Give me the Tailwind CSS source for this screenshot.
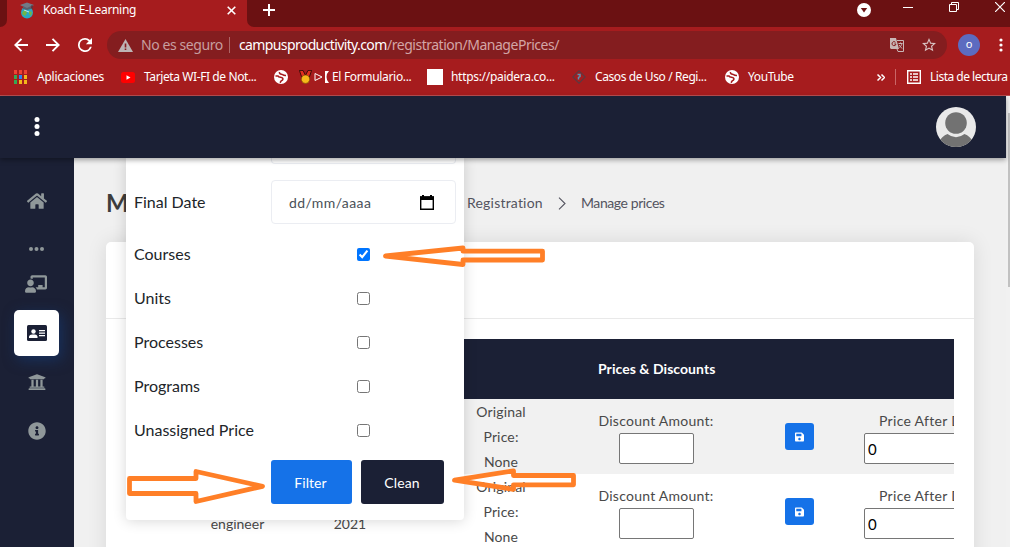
<!DOCTYPE html>
<html lang="es">
<head>
<meta charset="utf-8">
<title>Koach E-Learning</title>
<script src="https://cdn.jsdelivr.net/npm/@tailwindcss/browser@4"></script>
</head>
<body class="w-[1010px] h-[547px] overflow-hidden relative flex flex-col bg-[#f0f0f0] font-['Lato',sans-serif]">

<!-- Browser chrome -->
<div class="h-[96px] shrink-0 bg-[#a61c1e] border-b border-[#bb4e50] text-white font-['Noto_Sans',sans-serif] text-[12px] flex flex-col whitespace-nowrap">
  <div class="h-[27px] flex bg-[#a61c1e]">
    <div class="w-[7px] bg-[#6b1112] rounded-br-[7px]"></div>
    <div class="w-[240px] h-[20px] flex items-center pl-[13px]">
      <svg class="w-[14px] h-[17px]" viewBox="0 0 14 17"><circle cx="7" cy="10.5" r="6" fill="#28a9c4"/><path d="M3 9l3-1 1 3-2 3-3-2zM9 9l3 1-1 4-2-2z" fill="#6fb54b"/><path d="M4 8l5 2" stroke="#bde5ed"/><path d="M0 3l7-2.5L14 3 7 6.500z" fill="#727a87"/><path d="M3 4v3l4 1 4-1V4L7 6z" fill="#59606e"/><path d="M12 3v4" stroke="#39414d"/></svg>
      <span class="ml-[9px] w-[184px] tracking-[-0.33px]">Koach E-Learning</span>
      <svg class="w-[9px] h-[9px]" viewBox="0 0 9 9"><path d="M.7.7l7.600 7.600M8.300.7L.7 8.300" stroke="#fff" stroke-width="1.600"/></svg>
    </div>
    <div class="flex-1 h-[27px] bg-[#6b1112] rounded-bl-[7px] flex items-start">
      <svg class="ml-[16px] mt-[4px] w-[12px] h-[12px]" viewBox="0 0 12 12"><path d="M6 0v12M0 6h12" stroke="#fff" stroke-width="2"/></svg>
      <svg class="ml-[582px] mt-[3px] w-[14px] h-[14px]" viewBox="0 0 14 14"><circle cx="7" cy="7" r="7" fill="#fff"/><path d="M3.800 5h6.400L7 9.500z" fill="#6b1112"/></svg>
      <svg class="ml-[32px] mt-[7px] w-[10px] h-[1px]" viewBox="0 0 10 1"><path d="M0 0h10v1H0z" fill="#fff"/></svg>
      <svg class="ml-[36px] mt-[2px] w-[10px] h-[10px]" viewBox="0 0 10 10"><path d="M.5 2.500h7v7h-7zM2.500 2.500v-2h7v7h-2" fill="none" stroke="#fff"/></svg>
      <svg class="ml-[36px] mt-[2px] w-[10px] h-[10px]" viewBox="0 0 10 10"><path d="M0 0l10 10M10 0L0 10" stroke="#fff" stroke-width="1.200"/></svg>
    </div>
  </div>

  <div class="h-[36px] shrink-0 flex items-center text-[14px]">
    <svg class="ml-[14px] w-[14px] h-[14px]" viewBox="0 0 14 14"><path d="M14 7H1.500M7.500.8L1.300 7l6.200 6.200" fill="none" stroke="#fff" stroke-width="1.900"/></svg>
    <svg class="ml-[18px] w-[14px] h-[14px]" viewBox="0 0 14 14"><path d="M0 7h12.500M6.500.8L12.700 7l-6.200 6.200" fill="none" stroke="#fff" stroke-width="1.900"/></svg>
    <svg class="ml-[18px] w-[14px] h-[14px]" viewBox="4 4 16 16"><path d="M17.650 6.350A7.960 7.960 0 0 0 12 4a8 8 0 1 0 7.730 10h-2.080A6 6 0 1 1 12 6c1.660 0 3.140.69 4.220 1.780L13 11h7V4l-2.350 2.350z" fill="#fff"/></svg>
    <div class="ml-[15px] w-[840px] shrink-0 h-[28px] rounded-full bg-[#841d1f] flex items-center">
      <svg class="ml-[11px] w-[15px] h-[13px] shrink-0" viewBox="0 0 15 13"><path d="M7.500 0L15 13H0z" fill="#bdb4b4"/><path d="M6.700 4.500h1.600v4H6.700zM6.700 9.500h1.600v1.600H6.700z" fill="#841d1f"/></svg>
      <span class="ml-[8px] w-[88px] shrink-0 text-[#c79fa0] tracking-[-0.42px] pb-[2px]">No es seguro</span>
      <span class="w-px h-[16px] bg-[#ad6667] shrink-0"></span>
      <span class="ml-[9px] w-[148px] shrink-0 tracking-[-0.62px] pb-[2px]">campusproductivity.com</span>
      <span class="w-[503px] shrink-0 text-[#d3a5a6] tracking-[-0.48px] pb-[2px]">/registration/ManagePrices/</span>
      <svg class="w-[14px] h-[14px] shrink-0" viewBox="0 0 14 14"><path d="M0 0h6l3 11H1L0 10z" fill="#c9b6b6"/><path d="M7 2.500h6.500v11H8L7 11" fill="none" stroke="#c9b6b6"/><path d="M5.500 4.300A2 2 0 1 0 6 6H4.300" fill="none" stroke="#841d1f"/><path d="M8.500 5.500h4M10.500 4.500v1M12 5.500c-.5 2-1.500 3-2.500 4M9 7l3 3.500" fill="none" stroke="#c9b6b6"/></svg>
      <svg class="ml-[18px] w-[14px] h-[14px] shrink-0" viewBox="2 2 20 20"><path d="M22 9.240l-7.190-.62L12 2 9.190 8.630 2 9.240l5.460 4.730L5.820 21 12 17.270 18.180 21l-1.630-7.030L22 9.240zM12 15.400l-3.760 2.270 1-4.280-3.320-2.880 4.380-.38L12 6.100l1.710 4.040 4.380.38-3.320 2.880 1 4.280L12 15.400z" fill="#d9c4c4"/></svg>
    </div>
    <div class="ml-[11px] w-[22px] h-[22px] shrink-0 rounded-full bg-[#5c6bc0] text-[11px] flex items-center justify-center pb-px">o</div>
    <svg class="ml-[19px] w-[4px] h-[14px] shrink-0" viewBox="0 0 4 14"><g fill="#fff"><circle cx="2" cy="2" r="1.600"/><circle cx="2" cy="7" r="1.600"/><circle cx="2" cy="12" r="1.600"/></g></svg>
  </div>

  <div class="h-[28px] flex items-center pl-[14px]">
    <div class="w-[107px] shrink-0 flex items-center">
      <svg class="w-[13px] h-[14px]" viewBox="0 0 13 14"><path d="M0 0h3v4H0zM5 0h3v4H5zM10 0h3v4h-3z" fill="#ee4234"/><path d="M0 5h3v4H0z" fill="#37a852"/><path d="M5 5h3v4H5z" fill="#2c84f4"/><path d="M10 5h3v4h-3zM5 10h3v4H5zM10 10h3v4h-3z" fill="#f4b71b"/><path d="M0 10h3v4H0z" fill="#37a852"/></svg>
      <span class="ml-[10px] tracking-[-0.22px]">Aplicaciones</span>
    </div>
    <div class="w-[153px] shrink-0 flex items-center">
      <svg class="w-[14px] h-[11px]" viewBox="0 0 14 11"><rect width="14" height="11" rx="2.500" fill="#f00"/><path d="M5.500 3.200v4.600l4-2.300z" fill="#fff"/></svg>
      <span class="ml-[9px] tracking-[-0.4px]">Tarjeta WI-FI de Not...</span>
    </div>
    <div class="w-[153px] shrink-0 flex items-center">
      <svg class="w-[14px] h-[14px]" viewBox="0 0 14 14"><circle cx="7" cy="7" r="7" fill="#fff"/><path d="M1.500 6h2.500c.8 1.800 3.500.8 4.500 2s0 2-1 2.700-1 1.500-1.500 2M5.500 2c-.3 1.800.7 2 2 2.200s1.200 1.500 4.500 1.300" fill="none" stroke="#a61c1e" stroke-width="1.600"/></svg>
      <svg class="ml-[11px] w-[13px] h-[14px]" viewBox="0 0 13 14"><path d="M.4.4H4l2.500 5L9 .4h3.600L10 8H3z" fill="#e0301e" stroke="#1d0b05" stroke-width=".8"/><circle cx="6.500" cy="9.200" r="4.200" fill="#f6b91a" stroke="#7a4a05" stroke-width=".7"/></svg>
      <span class="ml-[2px] w-[18px] flex items-center"><svg class="w-[9px] h-[10px]" viewBox="0 0 9 10"><path d="M1 1.500v7L8 5z" fill="none" stroke="#fff"/></svg><svg class="ml-[2px] w-[4px] h-[12px]" viewBox="0 0 4 12"><path d="M0 0h4Q1.500 2.500 1.500 6T4 12H0z" fill="#fff"/></svg></span>
      <span class="tracking-[-0.33px]">El Formulario...</span>
    </div>
    <div class="w-[145px] shrink-0 flex items-center">
      <span class="w-[16px] h-[16px] bg-white"></span>
      <span class="ml-[8px] tracking-[-0.3px]">https://paidera.co...</span>
    </div>
    <div class="w-[153px] shrink-0 flex items-center">
      <svg class="w-[14px] h-[14px]" viewBox="0 0 14 14"><path d="M7 .8L13.200 7 7 13.200.8 7z" fill="none" stroke="#5d3840" stroke-width="1.200"/><path d="M5.500 4.500h2.500v2L6.500 7.500v2" fill="none" stroke="#5a95b5" stroke-width="1.500"/></svg>
      <span class="ml-[9px] tracking-[-0.4px]">Casos de Uso / Regi...</span>
    </div>
    <div class="w-[152px] shrink-0 flex items-center">
      <svg class="w-[14px] h-[14px]" viewBox="0 0 14 14"><circle cx="7" cy="7" r="7" fill="#fff"/><path d="M1.500 6h2.500c.8 1.800 3.500.8 4.500 2s0 2-1 2.700-1 1.500-1.500 2M5.500 2c-.3 1.800.7 2 2 2.200s1.200 1.500 4.500 1.300" fill="none" stroke="#a61c1e" stroke-width="1.600"/></svg>
      <span class="ml-[9px] tracking-[-0.4px]">YouTube</span>
    </div>
    <svg class="w-[8px] h-[7px] shrink-0" viewBox="0 0 8 7"><path d="M.5.5l3 3-3 3M4.500.5l3 3-3 3" fill="none" stroke="#fff" stroke-width="1.500"/></svg>
    <span class="ml-[10px] w-px h-[16px] bg-[#c96667] shrink-0"></span>
    <svg class="ml-[11px] w-[14px] h-[14px] shrink-0" viewBox="0 0 14 14"><path d="M.7.7h12.600v12.600H.7z" fill="none" stroke="#fff" stroke-width="1.400"/><path d="M3 4h2M3 7h2M3 10h2M6 4h5M6 7h5M6 10h5" stroke="#fff" stroke-width="1.500"/></svg>
    <span class="ml-[9px] tracking-[-0.5px]">Lista de lectura</span>
  </div>
</div>

<!-- Page -->
<div class="flex-1 flex min-h-0 relative">
  <div class="w-[1006px] flex flex-col min-h-0">
    <header class="h-[62px] shrink-0 bg-[#1b2035] flex items-center justify-between pl-[34px] pr-[30px] relative z-20 shadow-[0_2px_5px_rgba(0,0,0,0.35)]">
      <svg class="w-[6px] h-[20px]" viewBox="0 0 6 20"><g fill="#fff"><circle cx="3" cy="2.500" r="2.500"/><circle cx="3" cy="9.500" r="2.500"/><circle cx="3" cy="16.500" r="2.500"/></g></svg>
      <svg class="w-[40px] h-[40px]" viewBox="0 0 40 40"><defs><clipPath id="av"><circle cx="20" cy="20" r="20"/></clipPath></defs><g clip-path="url(#av)"><path d="M0 0h40v40H0z" fill="#e9e9e9"/><circle cx="20" cy="16" r="10.800" fill="#727272"/><path d="M2 36Q6 29 11.500 27Q20 33.500 28.500 27Q34 29 38 36V40H2z" fill="#727272"/></g></svg>
    </header>
    <div class="flex-1 flex min-h-0">
      <aside class="w-[74px] shrink-0 bg-[#1b2035] text-[#8f9799] flex flex-col items-center pt-[34px]">
        <svg class="w-[20px] h-[18px]" viewBox="0 0 576 512" fill="currentColor"><path d="M280.370 148.260L96 300.110V464a16 16 0 0 0 16 16l112.060-.29a16 16 0 0 0 15.920-16V368a16 16 0 0 1 16-16h64a16 16 0 0 1 16 16v95.640a16 16 0 0 0 16 16.050L464 480a16 16 0 0 0 16-16V300L295.670 148.260a12.190 12.190 0 0 0-15.300 0zM571.600 251.470L488 182.560V44.050a12 12 0 0 0-12-12h-56a12 12 0 0 0-12 12v72.610L318.470 43a48 48 0 0 0-61 0L4.340 251.470a12 12 0 0 0-1.600 16.900l25.500 31A12 12 0 0 0 45.150 301l235.220-193.740a12.190 12.190 0 0 1 15.300 0L530.900 301a12 12 0 0 0 16.900-1.600l25.500-31a12 12 0 0 0-1.700-16.930z"/></svg>
        <svg class="mt-[37px] mr-px w-[15px] h-[4px]" viewBox="0 0 15 4" fill="currentColor"><circle cx="2" cy="2" r="2"/><circle cx="7.500" cy="2" r="2"/><circle cx="13" cy="2" r="2"/></svg>
        <svg class="mt-[24px] mr-[2px] w-[22px] h-[18px]" viewBox="0 0 640 512" fill="currentColor"><path d="M208 352c-2.390 0-4.780.35-7.060 1.090C187.980 357.300 174.350 360 160 360c-14.350 0-27.980-2.700-40.950-6.910-2.280-.74-4.660-1.090-7.050-1.090C49.940 352-.33 402.480 0 464.620.14 490.880 21.730 512 48 512h224c26.270 0 47.860-21.120 48-47.380.33-62.140-49.940-112.620-112-112.620zm-48-32c53.020 0 96-42.980 96-96s-42.980-96-96-96-96 42.980-96 96 42.980 96 96 96zM592 0H208c-26.470 0-48 22.250-48 49.590V96c23.420 0 45.100 6.780 64 17.800V64h352v288h-64v-64H384v64h-76.240c19.100 16.690 33.120 38.730 39.690 64H592c26.470 0 48-22.250 48-49.590V49.590C640 22.250 618.470 0 592 0z"/></svg>
        <div class="mt-[17px] mr-px w-[45px] h-[46px] rounded-[5px] bg-white flex items-center justify-center shadow-[3px_4px_14px_rgba(21,60,120,0.6)]">
          <svg class="ml-px w-[20px] h-[16px]" viewBox="0 0 20 16"><rect width="20" height="16" rx="1.500" fill="#1b2035"/><g fill="#fff"><circle cx="6.500" cy="6.500" r="2.200"/><path d="M2 13v-1.500Q2.500 9.500 5 9.500h3Q10 9.500 10.500 11.500V13zM12 5h6v1.200h-6zM12 7.500h6v1.200h-6zM12 10h6v1.200h-6z"/></g></svg>
        </div>
        <svg class="mt-[17px] w-[18px] h-[18px]" viewBox="0 0 512 512" fill="currentColor"><path d="M496 128v16a8 8 0 0 1-8 8h-24v12c0 6.627-5.373 12-12 12H60c-6.627 0-12-5.373-12-12v-12H24a8 8 0 0 1-8-8v-16a8 8 0 0 1 4.941-7.392l232-88a7.996 7.996 0 0 1 6.118 0l232 88A8 8 0 0 1 496 128zm-24 304H40c-13.255 0-24 10.745-24 24v16a8 8 0 0 0 8 8h464a8 8 0 0 0 8-8v-16c0-13.255-10.745-24-24-24zM96 192v192H60c-6.627 0-12 5.373-12 12v20h416v-20c0-6.627-5.373-12-12-12h-36V192h-64v192h-64V192h-64v192h-64V192H96z"/></svg>
        <svg class="mt-[31px] w-[18px] h-[18px]" viewBox="0 0 512 512" fill="currentColor"><path d="M256 8C119.043 8 8 119.083 8 256c0 136.997 111.043 248 248 248s248-111.003 248-248C504 119.083 392.957 8 256 8zm0 110c23.196 0 42 18.804 42 42s-18.804 42-42 42-42-18.804-42-42 18.804-42 42-42zm56 254c0 6.627-5.373 12-12 12h-88c-6.627 0-12-5.373-12-12v-24c0-6.627 5.373-12 12-12h12v-64h-12c-6.627 0-12-5.373-12-12v-24c0-6.627 5.373-12 12-12h64c6.627 0 12 5.373 12 12v100h12c6.627 0 12 5.373 12 12v24z"/></svg>
      </aside>

      <main class="flex-1 relative overflow-hidden pl-[32px] pr-[32px] text-[14px] text-[#494949] whitespace-nowrap">
        <div class="h-[84px] flex items-center pt-[6px]">
          <h1 class="w-[361px] text-[24px] font-bold text-[#3d3d3d]">Manage prices</h1>
          <nav class="flex items-center text-[#54545f]">
            <span class="w-[91px] tracking-[0.2px] pb-[2px]">Registration</span>
            <svg class="w-[8px] h-[13px]" viewBox="0 0 8 13"><path d="M1 .7l6 5.800-6 5.800" fill="none" stroke="#54545f" stroke-width="1.100"/></svg>
            <span class="ml-[15px] tracking-[-0.42px] pb-[2px]">Manage prices</span>
          </nav>
        </div>
        <section class="h-[340px] bg-white rounded-t-[5px] shadow-[0_0_20px_rgba(0,0,0,0.1)]">
          <div class="h-[77px] border-b border-[#e9e9e9]"></div>
          <div class="mx-[20px] mt-[20px] overflow-hidden">
            <div class="w-[1000px] h-[60px] bg-[#1b2035] text-white font-bold flex items-center pl-[472px] pb-[2px] tracking-[0.05px]">Prices &amp; Discounts</div>

            <div class="w-[1000px] h-[75px] bg-[#f1f1f1] flex text-center leading-[25px]">
              <div class="ml-[54px] w-[115px] pt-[12px]">Software<br>engineer</div>
              <div class="w-[110px] pt-[12px]">Aug. 20,<br>2021</div>
              <div class="w-[192px] tracking-[0.15px]">Original<br>Price:<br>None</div>
              <div class="w-[118px] pt-[9px] flex flex-col items-center"><span class="tracking-[0.25px]">Discount Amount:</span><span class="w-[75px] h-[31px] shrink-0 bg-white border border-[#767676] rounded-[2px]"></span></div>
              <div class="ml-[70px] mt-[24px] w-[29px] h-[27px] bg-[#1572e8] rounded-[3px] flex items-center justify-center"><svg class="w-[9px] h-[10px]" viewBox="0 32 448 448" fill="#fff"><path d="M433.941 129.941l-83.882-83.882A48 48 0 0 0 316.118 32H48C21.490 32 0 53.490 0 80v352c0 26.510 21.490 48 48 48h352c26.510 0 48-21.490 48-48V163.882a48 48 0 0 0-14.059-33.941zM224 416c-35.346 0-64-28.654-64-64 0-35.346 28.654-64 64-64s64 28.654 64 64c0 35.346-28.654 64-64 64zm96-304.520V212c0 6.627-5.373 12-12 12H76c-6.627 0-12-5.373-12-12V108c0-6.627 5.373-12 12-12h228.520c3.183 0 6.235 1.264 8.485 3.515l3.480 3.480A11.996 11.996 0 0 1 320 111.480z"/></svg></div>
              <div class="ml-[50px] w-[180px] pt-[9px] flex flex-col items-start"><span class="pl-[15px] tracking-[0.3px]">Price After Discount:</span><span class="w-[165px] h-[31px] shrink-0 bg-white border border-[#767676] rounded-[2px] text-left pl-[3px] leading-[30px] text-[15px] text-black">0</span></div>
            </div>

            <div class="w-[1000px] h-[75px] bg-white flex text-center leading-[25px]">
              <div class="ml-[54px] w-[115px] pt-[12px]">Software<br>engineer</div>
              <div class="w-[110px] pt-[12px]">Aug. 20,<br>2021</div>
              <div class="w-[192px] tracking-[0.15px]">Original<br>Price:<br>None</div>
              <div class="w-[118px] pt-[9px] flex flex-col items-center"><span class="tracking-[0.25px]">Discount Amount:</span><span class="w-[75px] h-[31px] shrink-0 bg-white border border-[#767676] rounded-[2px]"></span></div>
              <div class="ml-[70px] mt-[24px] w-[29px] h-[27px] bg-[#1572e8] rounded-[3px] flex items-center justify-center"><svg class="w-[9px] h-[10px]" viewBox="0 32 448 448" fill="#fff"><path d="M433.941 129.941l-83.882-83.882A48 48 0 0 0 316.118 32H48C21.490 32 0 53.490 0 80v352c0 26.510 21.490 48 48 48h352c26.510 0 48-21.490 48-48V163.882a48 48 0 0 0-14.059-33.941zM224 416c-35.346 0-64-28.654-64-64 0-35.346 28.654-64 64-64s64 28.654 64 64c0 35.346-28.654 64-64 64zm96-304.520V212c0 6.627-5.373 12-12 12H76c-6.627 0-12-5.373-12-12V108c0-6.627 5.373-12 12-12h228.520c3.183 0 6.235 1.264 8.485 3.515l3.480 3.480A11.996 11.996 0 0 1 320 111.480z"/></svg></div>
              <div class="ml-[50px] w-[180px] pt-[9px] flex flex-col items-start"><span class="pl-[15px] tracking-[0.3px]">Price After Discount:</span><span class="w-[165px] h-[31px] shrink-0 bg-white border border-[#767676] rounded-[2px] text-left pl-[3px] leading-[30px] text-[15px] text-black">0</span></div>
            </div>
          </div>
        </section>

        <!-- Filter dropdown -->
        <div class="absolute left-[52px] top-0 w-[338px] h-[362px] bg-white rounded-b-[4px] shadow-[0_1px_14px_rgba(0,0,0,0.16)] pl-[8px] text-[16px] text-[#212529]">
          <div class="ml-[137px] w-[185px] h-[6px] border border-t-0 border-[#ebedf2] rounded-b-[4px]"></div>
          <div class="mt-[16px] h-[44px] flex items-center">
            <span class="w-[137px]">Final Date</span>
            <div class="w-[185px] h-[44px] border border-[#ebedf2] rounded-[4px] flex items-center justify-between pl-[17px] pr-[21px] text-[14px] text-[#495057]">
              <span class="tracking-[0.4px]">dd/mm/aaaa</span>
              <svg class="w-[14px] h-[15px]" viewBox="0 0 14 15"><path d="M.7 2h12.600v12.300H.7z" fill="none" stroke="#000" stroke-width="1.400"/><path d="M0 1.500h14V5H0zM2 0h2v2H2zM10 0h2v2h-2z"/></svg>
            </div>
          </div>
          <div class="mt-[8px] h-[44px] flex items-center"><span class="w-[223px]">Courses</span><input type="checkbox" checked class="w-[13px] h-[13px]"></div>
          <div class="h-[44px] flex items-center"><span class="w-[223px]">Units</span><input type="checkbox" class="w-[13px] h-[13px]"></div>
          <div class="h-[44px] flex items-center"><span class="w-[223px]">Processes</span><input type="checkbox" class="w-[13px] h-[13px]"></div>
          <div class="h-[44px] flex items-center"><span class="w-[223px]">Programs</span><input type="checkbox" class="w-[13px] h-[13px]"></div>
          <div class="h-[44px] flex items-center"><span class="w-[223px]">Unassigned Price</span><input type="checkbox" class="w-[13px] h-[13px]"></div>
          <div class="mt-[8px] ml-[137px] flex gap-[9px] text-white text-[14px]">
            <div class="w-[81px] h-[44px] rounded-[3px] bg-[#1572e8] flex items-center justify-center pr-[2px] tracking-[0.1px]">Filter</div>
            <div class="w-[83px] h-[44px] rounded-[3px] bg-[#1b2035] flex items-center justify-center pr-px tracking-[0.1px]">Clean</div>
          </div>
        </div>
      </main>
    </div>
  </div>
  <div class="w-[4px] bg-[#f1f1f1] pl-[2px] pt-[17px]"><div class="h-[174px] bg-[#c1c1c1]"></div></div>
</div>

<!-- Annotation arrows -->
<svg class="absolute left-0 top-0 z-30 w-[1010px] h-[547px] pointer-events-none" viewBox="0 0 1010 547" fill="none" stroke="#ff7f27" stroke-width="4.800" stroke-linejoin="round">
  <path d="M385.500 256L463 248v3.200h79.500v8.800H463v4.500z"/>
  <path d="M129.500 478.500H196V471.500L262.500 486.300 196 501.500V493.500H129.500z"/>
  <path d="M454.500 480.200L513.500 470.800V475.500h60v9.300H513.500v4.500z"/>
</svg>
</body>
</html>
